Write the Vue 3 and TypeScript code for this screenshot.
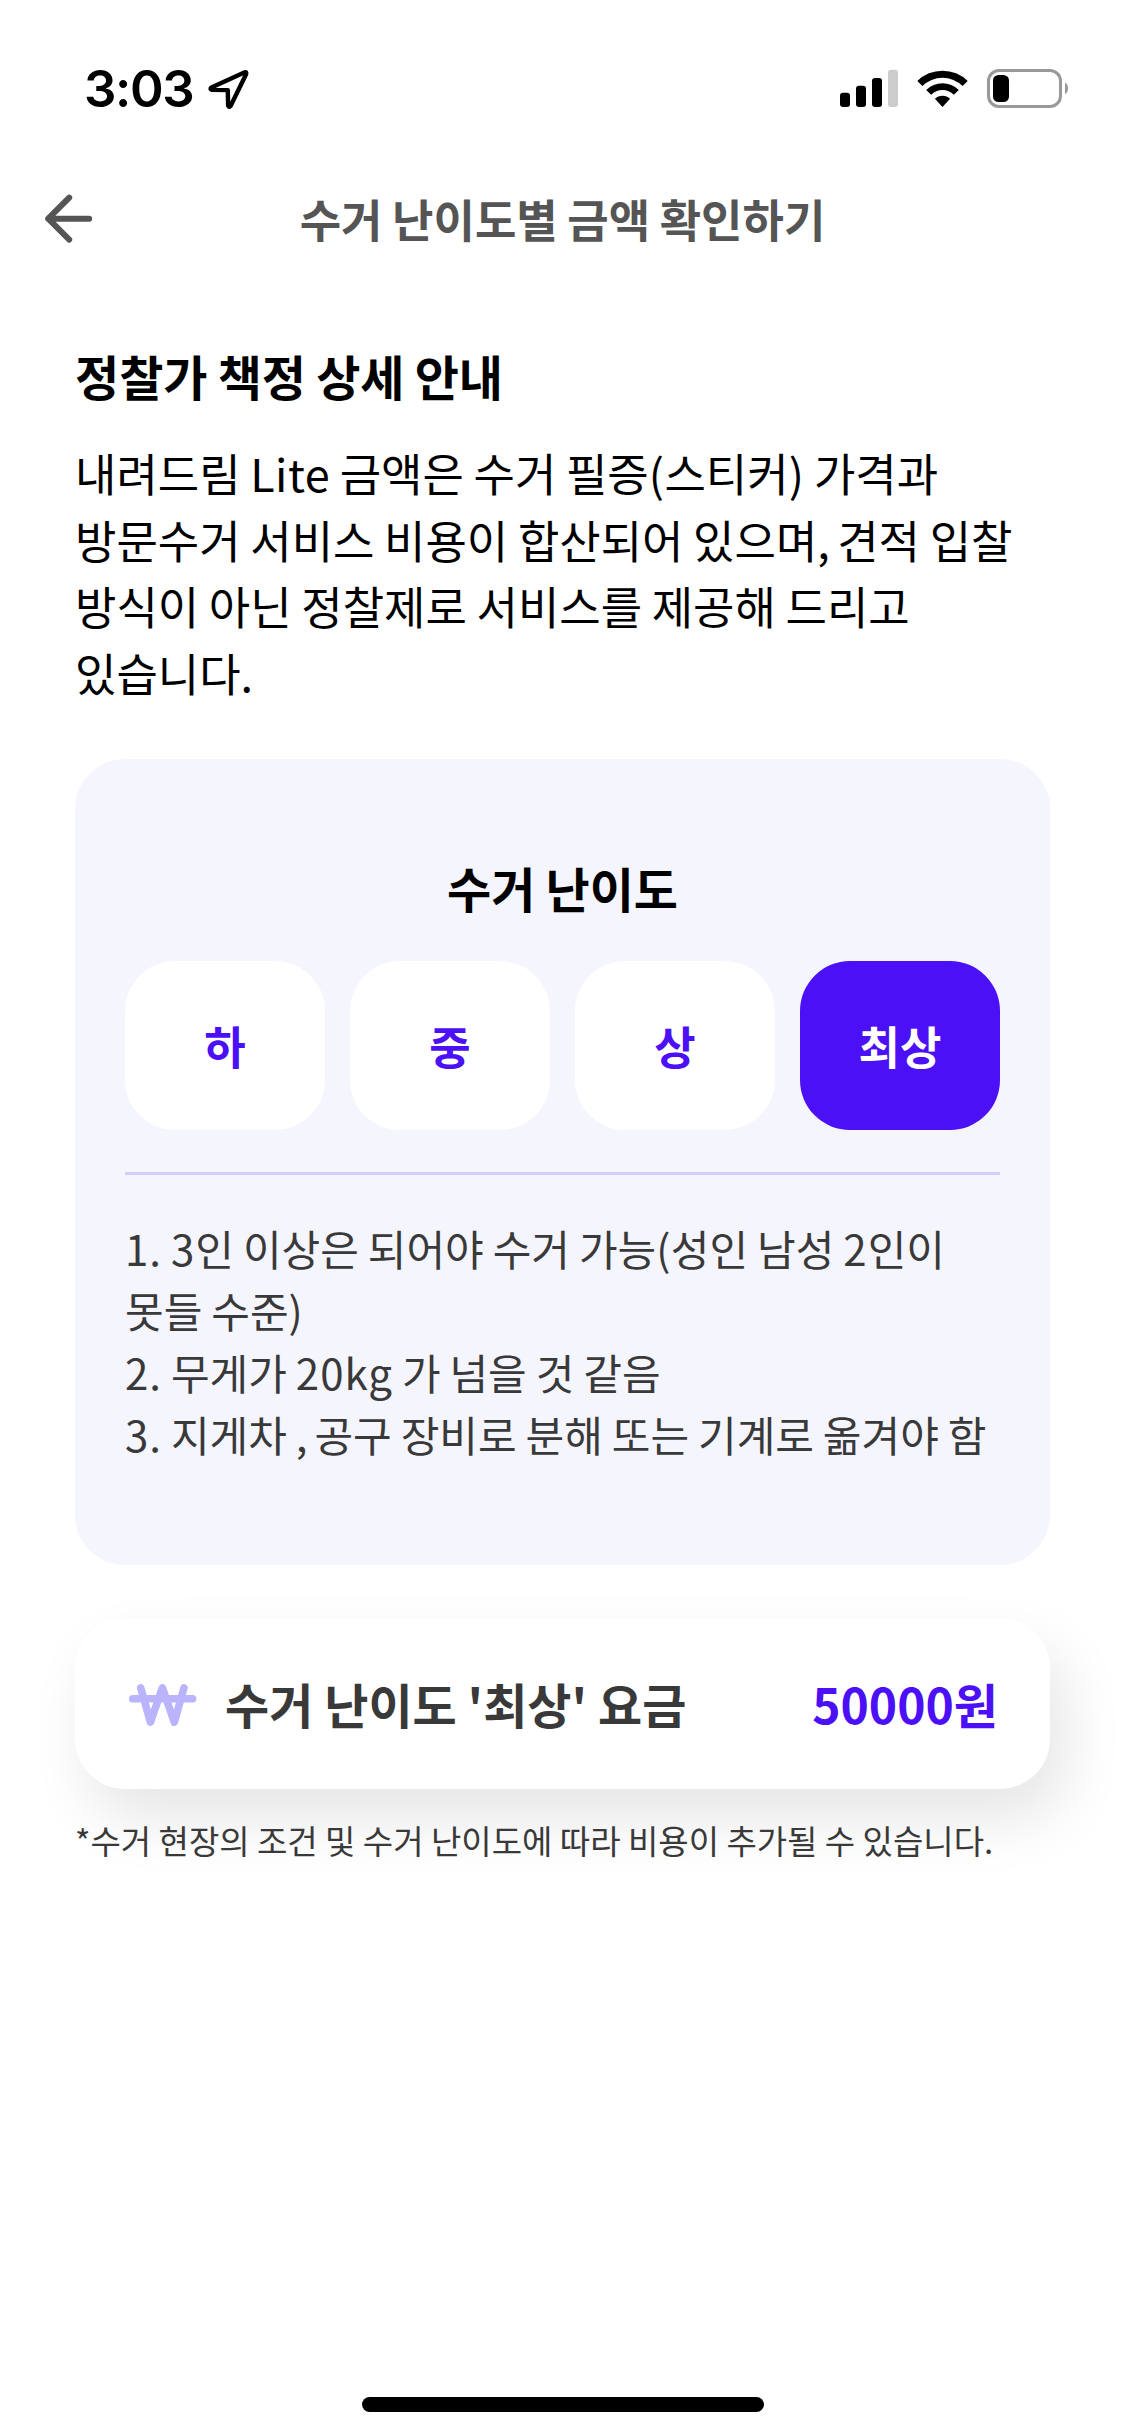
<script setup lang="ts">
import { computed, ref } from 'vue'

interface Level {
  name: string
  price: number
  notes: string[]
}

interface Segment {
  text: string
  kind: string
}

const intro: string[] = [
  '내려드림 Lite 금액은 수거 필증(스티커) 가격과',
  '방문수거 서비스 비용이 합산되어 있으며, 견적 입찰',
  '방식이 아닌 정찰제로 서비스를 제공해 드리고',
  '있습니다.',
]

const hardest: Level = {
  name: '최상',
  price: 50000,
  notes: [
    '1. 3인 이상은 되어야 수거 가능(성인 남성 2인이',
    '못들 수준)',
    '2. 무게가 20kg 가 넘을 것 같음',
    '3. 지게차 , 공구 장비로 분해 또는 기계로 옮겨야 함',
  ],
}

const levelNames: string[] = ['하', '중', '상', '최상']
const selected = ref<Level>(hardest)
const priceText = computed(() => `${selected.value.price}원`)

// Latin runs, numerals and commas are tracked separately from Hangul.
function segments(line: string): Segment[] {
  return line
    .split(/([0-9]+[a-z.]*|[A-Za-z]+|[()]|,)/)
    .filter((text) => text.length > 0)
    .map((text) => {
      if (/^[0-9]/.test(text)) return { text, kind: 'numeral' }
      if (/^[A-Za-z()]/.test(text)) return { text, kind: 'latin' }
      if (text === ',') return { text, kind: 'comma' }
      return { text, kind: 'hangul' }
    })
}
</script>

<template>
  <div class="screen">
    <div class="status">
      <div class="status-left">
        <span class="time">3:03</span>
        <svg class="location" width="44" height="44" viewBox="0 0 44 44">
          <path d="M38.8 6.3 L5.4 21.4 Q3.4 23.2 6 23.9 L21.8 24.1 L22.1 39.4 Q23.1 42 24.7 39.8 L40.2 8 Q40.6 5.6 38.8 6.3 Z" fill="none" stroke="#000" stroke-width="4.4" stroke-linejoin="round" />
        </svg>
      </div>
      <svg class="indicators" width="230" height="40" viewBox="840 69 230 40">
        <rect x="840" y="92.7" width="10" height="14.3" rx="3" />
        <rect x="856" y="85.7" width="10" height="21.3" rx="3" />
        <rect x="872" y="78" width="10" height="29" rx="3" />
        <rect x="888" y="69.7" width="10" height="37.3" rx="3" fill="#ccc" />
        <path d="M917.3 81 A35.8 35.8 0 0 1 967.7 81 L962.6 86 A28.6 28.6 0 0 0 922.4 86 Z" />
        <path d="M926.2 89.9 A23.2 23.2 0 0 1 958.8 89.9 L953.9 94.8 A16.2 16.2 0 0 0 931.1 94.8 Z" />
        <path d="M934.9 98.8 A10.8 10.8 0 0 1 950.1 98.8 L942.5 107 Z" />
        <rect x="988.5" y="70.5" width="72" height="36" rx="10.5" fill="none" stroke="#999" stroke-width="3" />
        <rect x="993" y="75" width="16" height="27" rx="5.5" />
        <path d="M1065 82.6 A7 7 0 0 1 1065 94.2 Z" fill="#999" />
      </svg>
    </div>

    <header class="header">
      <svg class="back" width="54" height="54" viewBox="0 0 54 54">
        <path d="M29.2 6.7 L8.2 27.7 L29.2 48.7 M8.2 27.7 H49.2" fill="none" stroke="#555" stroke-width="6" stroke-linecap="round" stroke-linejoin="round" />
      </svg>
      <h1 class="header-title">수거 난이도별 금액 확인하기</h1>
    </header>

    <main class="content">
      <h2 class="title">정찰가 책정 상세 안내</h2>
      <p class="intro">
        <span v-for="line in intro" :key="line" class="line"><span v-for="(part, i) in segments(line)" :key="i" :class="part.kind">{{ part.text }}</span></span>
      </p>

      <section class="panel">
        <h3 class="panel-title">수거 난이도</h3>
        <div class="levels">
          <button
            v-for="name in levelNames"
            :key="name"
            type="button"
            class="level"
            :class="{ active: name === selected.name }"
          >{{ name }}</button>
        </div>
        <div class="divider"></div>
        <div class="notes">
          <span v-for="note in selected.notes" :key="note" class="line"><span v-for="(part, i) in segments(note)" :key="i" :class="part.kind">{{ part.text }}</span></span>
        </div>
      </section>

      <section class="fee">
        <svg class="won" width="68" height="44" viewBox="129 1683 68 44">
          <path d="M132.7 1698.8 H192.6 M140.7 1687.8 L150.4 1722.2 L162.4 1687.8 L174.3 1722.2 L184 1687.8" fill="none" stroke="#bab4fd" stroke-width="7.6" stroke-linecap="round" stroke-linejoin="round" />
        </svg>
        <span class="fee-label">수거 난이도 '{{ selected.name }}' 요금</span>
        <span class="fee-price">{{ priceText }}</span>
      </section>
      <p class="footnote">*수거 현장의 조건 및 수거 난이도에 따라 비용이 추가될 수 있습니다.</p>
    </main>

    <div class="home-indicator"></div>
  </div>
</template>

<style>
body {
  margin: 0;
  background: #fff;
}
</style>

<style scoped>
.screen {
  display: flex;
  flex-direction: column;
  width: 1125px;
  height: 2436px;
  box-sizing: border-box;
  padding-bottom: 24px;
  overflow: hidden;
  background: #fff;
  color: #000;
  font-family: 'Noto Sans CJK KR', sans-serif;
}

h1, h2, h3, p {
  margin: 0;
}

.status {
  display: flex;
  justify-content: space-between;
  height: 132px;
  box-sizing: border-box;
  padding: 66px 55px 0 84px;
}

.status-left {
  display: flex;
  height: 44px;
}

.time {
  width: 122px;
  font: 600 51px/46px Inter, sans-serif;
  letter-spacing: -1.4px;
}

.indicators {
  margin-top: 3px;
}

.header {
  display: grid;
  grid-template-columns: 99px 1fr 99px;
  align-items: center;
  height: 172px;
}

.back {
  margin-left: 40px;
}

.header-title {
  color: #555;
  font-size: 45px;
  font-weight: 700;
  line-height: 65px;
  text-align: center;
  word-spacing: -0.6px;
}

.content {
  flex: 1;
  padding: 36px 75px 0;
}

.title {
  font-size: 48px;
  font-weight: 700;
  line-height: 70px;
  word-spacing: -0.7px;
}

.line {
  display: block;
  white-space: nowrap;
}

.numeral {
  letter-spacing: 0.024em;
}

.latin {
  letter-spacing: 0.01em;
}

.comma {
  letter-spacing: -0.05em;
}

.intro {
  margin-top: 30px;
  font-size: 45px;
  line-height: 66.5px;
  word-spacing: -0.45px;
}

.panel {
  height: 806px;
  box-sizing: border-box;
  margin-top: 53px;
  padding: 93px 50px 0;
  border-radius: 50px;
  background: #f5f5fe;
}

.panel-title {
  font-size: 48px;
  font-weight: 700;
  line-height: 70px;
  text-align: center;
  word-spacing: -0.7px;
}

.levels {
  display: grid;
  grid-template-columns: repeat(4, 1fr);
  gap: 25px;
  margin-top: 39px;
}

.level {
  height: 169px;
  padding: 0;
  border: 0;
  border-radius: 50px;
  background: #fff;
  color: #4b10f5;
  font-family: inherit;
  font-size: 45px;
  font-weight: 700;
  line-height: 65px;
}

.level.active {
  background: #4b10f5;
  color: #fff;
}

.divider {
  height: 3px;
  margin: 42px 0;
  background: #d2cdfd;
}

.notes {
  color: #393939;
  font-size: 42px;
  line-height: 62px;
  word-spacing: -0.45px;
}

.fee {
  display: flex;
  align-items: center;
  height: 171px;
  box-sizing: border-box;
  margin-top: 53px;
  padding: 0 52px 0 54px;
  border-radius: 50px;
  background: #fff;
  box-shadow: 15px 30px 60px rgba(0, 0, 0, 0.1);
}

.won {
  margin-top: 3px;
}

.fee-label {
  margin-left: 28px;
  padding-bottom: 2px;
  color: #393939;
  font-size: 48px;
  font-weight: 700;
  line-height: 70px;
}

.fee-price {
  margin-left: auto;
  padding-bottom: 2px;
  color: #4b10f5;
  font-size: 48px;
  font-weight: 700;
  line-height: 70px;
}

.footnote {
  position: relative;
  margin-top: 27px;
  color: #393939;
  font-size: 33px;
  line-height: 48px;
  white-space: nowrap;
}

.home-indicator {
  align-self: center;
  width: 402px;
  height: 15px;
  border-radius: 8px;
  background: #000;
}
</style>
